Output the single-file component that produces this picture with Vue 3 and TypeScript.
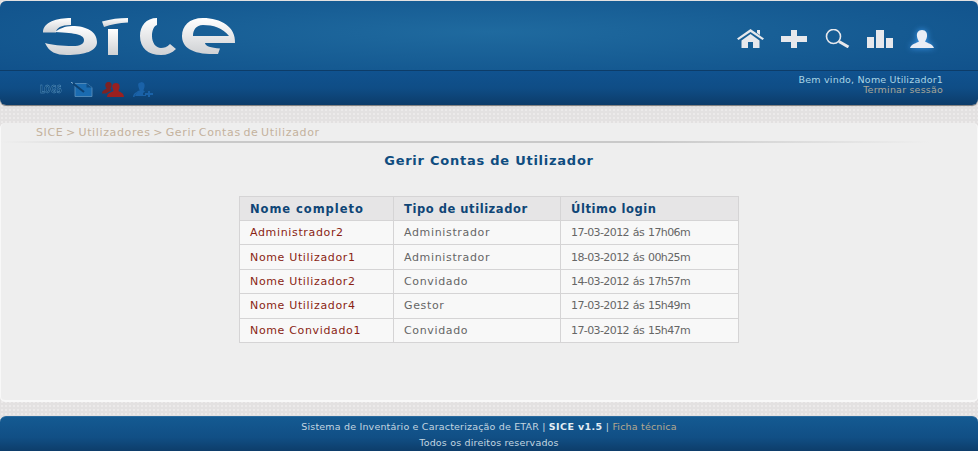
<template>
  <div class="page">
    <header class="header">
      <div class="top-bar">
        <svg class="logo" width="200" height="44" viewBox="0 0 200 44" aria-label="SICE">
          <defs>
            <linearGradient id="logoFill" x1="0" y1="0" x2="0" y2="1">
              <stop offset="0" stop-color="#ffffff" />
              <stop offset="1" stop-color="#cfd1d4" />
            </linearGradient>
          </defs>
          <g fill="url(#logoFill)">
            <path d="M28 1C14 1 0 5 0 15.500H13C13 11 18 8 28 8Z" />
            <path d="M12 15C16 12 22 9 29 9C44 9 54 15 54 25C54 34 42 38 24 38C13 38 6 35 2 26C9 28 18 29 30 29C37 29 41 27 41 23C41 18 34 16 12 15Z" />
            <path d="M65 12H75V38H65Z" />
            <path d="M59 4.500C68 2 76 1 85 1V5.500C76 6 68 7.500 61 10Z" />
            <path d="M114 1C103 1 97 9 97 19C97 31 105 38 118 38C124 38 129 36 133 32L127 27C124 30 121 31 118 31C113 31 109 26 109 19C109 13 111 9 114 8Z" />
            <path fill-rule="evenodd" d="M160 1C146 1 139 9 139 19C139 31 150 38 175 37L177 31.500C168 31 162 29 162 26H192C193 10 178 1 160 1ZM160 8C170 8 180 11 186 19H150C150 13 153 8 160 8Z" />
          </g>
        </svg>
        <nav class="main-nav">
          <svg width="27" height="19" viewBox="0 0 27 19"><path fill="#e7e8ec" d="M13.500 0L27 9.500L25.500 11L13.500 3L1.500 11L0 9.500ZM4.500 11.500L13.500 5L22.500 11.500V19H16V13H11V19H4.500ZM20 1H23V6L20 4Z" /></svg>
          <svg width="26" height="18" viewBox="0 0 26 18"><path fill="#e7e8ec" d="M10 0H16V6H26V12H16V18H10V12H0V6H10Z" /></svg>
          <svg width="26" height="19" viewBox="0 0 26 19" fill="none" stroke="#e7e8ec"><circle cx="9.500" cy="7.500" r="7" stroke-width="1.600" /><path stroke-width="3" d="M15 12.500L24.500 18" /></svg>
          <svg width="26" height="18" viewBox="0 0 26 18"><path fill="#e7e8ec" d="M0 7H7V18H0ZM9 0H17V18H9ZM19 8H26V18H19Z" /></svg>
          <svg class="user-icon" width="24" height="18" viewBox="0 0 24 18"><path fill="#e9edf5" d="M12 0C16 0 17.500 3 17 6.500C16.700 9 15.500 10.500 15 11.500C17 13 23 14 24 18H0C1 14 7 13 9 11.500C8.500 10.500 7.300 9 7 6.500C6.500 3 8 0 12 0Z" /></svg>
        </nav>
      </div>
      <div class="sub-bar">
        <div class="tools">
          <span class="logs">LOGS</span>
          <svg width="22" height="15" viewBox="0 0 22 15"><path fill="#1a6bb0" stroke="#5d93bf" stroke-width="0.800" d="M4 1.500H15.500L21 5.500V14.500H4Z" /><path fill="#0f4e86" d="M15.500 1.500L21 5.500H15.500Z" /><path stroke="#8fb8d6" stroke-width="1" d="M0 0L2 1.500" /><path stroke="#0e4272" stroke-width="2.200" d="M2 1.500L13 10" /></svg>
          <svg width="22" height="15" viewBox="0 0 22 15"><path fill="#7e2222" d="M6.500 0C9.500 0 10 2.500 9.500 4.500C9.200 5.500 8.500 6.500 8.500 7L10 8L4 11.500H0C0 8.500 3.500 7.500 4.500 6.500C4.500 6 3.800 5.500 3.500 4.500C3 2.500 3.500 0 6.500 0Z" /><path fill="#9a2020" d="M14 1C17.500 1 18 4 17.500 6C17.200 7.500 16.500 8 16.500 9C18 10 22 11 22 15H5C5 11 10 10 11.500 9C11.500 8 10.800 7.500 10.500 6C10 4 10.500 1 14 1Z" /></svg>
          <svg width="20" height="15" viewBox="0 0 20 15"><path fill="#1a62a8" d="M8 0C11.500 0 12 3 11.500 5C11.200 6.500 10.500 7.500 10.500 8.500L12 9.500L10 11V13H13V14H2C3 11 5.500 10 6.500 8.500C6.500 7.500 5.800 6.500 5.500 5C5 3 5 1.500 6 1C7 0.500 7.500 1 8 0ZM0 15C0 11 4.500 10 5.500 8.500L6 9C5 10.500 2 11.500 1.500 15ZM15 9H17V11H20V13H17V15H15V13H12V11H15Z" /></svg>
        </div>
        <div class="session">
          <div class="welcome">Bem vindo, Nome Utilizador1</div>
          <a class="logout">Terminar sessão</a>
        </div>
      </div>
    </header>

    <main class="card">
      <div class="breadcrumb">{{ crumbs.join(' > ') }}</div>
      <h1 class="title">Gerir Contas de Utilizador</h1>
      <table class="users">
        <thead>
          <tr>
            <th class="col-name">Nome completo</th>
            <th class="col-type">Tipo de utilizador</th>
            <th class="col-login">Último login</th>
          </tr>
        </thead>
        <tbody>
          <tr v-for="user in users" :key="user.name">
            <td class="name">{{ user.name }}</td>
            <td class="type">{{ user.type }}</td>
            <td class="login">{{ user.login }}</td>
          </tr>
        </tbody>
      </table>
    </main>

    <footer class="footer">
      <div>Sistema de Inventário e Caracterização de ETAR | <b>SICE v1.5</b> | <a class="tech">Ficha técnica</a></div>
      <div>Todos os direitos reservados</div>
    </footer>
  </div>
</template>

<script setup lang="ts">
type User = {
  name: string
  type: string
  login: string
}

const crumbs = ['SICE', 'Utilizadores', 'Gerir Contas de Utilizador']

const users: User[] = [
  { name: 'Administrador2', type: 'Administrador', login: '17-03-2012 ás 17h06m' },
  { name: 'Nome Utilizador1', type: 'Administrador', login: '18-03-2012 ás 00h25m' },
  { name: 'Nome Utilizador2', type: 'Convidado', login: '14-03-2012 ás 17h57m' },
  { name: 'Nome Utilizador4', type: 'Gestor', login: '17-03-2012 ás 15h49m' },
  { name: 'Nome Convidado1', type: 'Convidado', login: '17-03-2012 ás 15h47m' },
]
</script>

<style>
html,
body {
  margin: 0;
  overflow: hidden;
}
</style>

<style scoped>
.page {
  display: flex;
  flex-direction: column;
  height: 451px;
  padding-top: 1px;
  box-sizing: border-box;
  font-family: "DejaVu Sans", sans-serif;
  font-size: 11px;
  background-color: #e3e1e1;
  background-image: radial-gradient(#eceaea 1px, transparent 1px);
  background-size: 4px 4px;
}

.header {
  flex: none;
  border-radius: 6px;
  overflow: hidden;
  box-shadow: 0 1px 1px #777;
}

.top-bar {
  display: flex;
  align-items: flex-start;
  justify-content: space-between;
  height: 70px;
  padding: 16px 44px 0 43px;
  box-sizing: border-box;
  background: radial-gradient(ellipse 70% 90% at 50% 45%, #1f6a9f 0%, #155a92 60%, #10508a 100%);
  border-bottom: 1px solid #0d3c68;
}

.main-nav {
  display: flex;
  align-items: center;
  gap: 17px;
  margin-top: 12px;
}

.user-icon {
  filter: drop-shadow(0 0 3px #3d9bf0);
}

.sub-bar {
  display: flex;
  justify-content: space-between;
  height: 34px;
  padding: 4px 35px 0 40px;
  box-sizing: border-box;
  background: linear-gradient(#10528f, #0f4d86 50%, #0c3c6a);
}

.tools {
  display: flex;
  align-items: center;
  gap: 9px;
  height: 28px;
}

.logs {
  font-size: 11px;
  font-weight: bold;
  color: #0e4778;
  -webkit-text-stroke: 0.5px #5f9bc9;
  transform: scaleX(0.66);
  transform-origin: left center;
  margin-right: -11px;
  white-space: nowrap;
}

.session {
  text-align: right;
  font-size: 9.500px;
  line-height: 10px;
  letter-spacing: 0.2px;
}

.welcome {
  color: #a9d5e6;
}

.logout {
  color: #a7a697;
}

.card {
  flex: 1;
  margin: 18px 0 14px;
  padding: 3px 0 0;
  background: #eeeeee;
  border-radius: 5px;
  border: 1px solid #f8f8f8;
  border-width: 0 1px 2px 1px;
  display: flex;
  flex-direction: column;
}

.breadcrumb {
  padding: 0 0 1px 35px;
  line-height: 14px;
  font-size: 11px;
  letter-spacing: 0.63px;
  word-spacing: -1.500px;
  color: #c4b29d;
  margin-right: 48px;
  border-bottom: 2px solid transparent;
  border-image: linear-gradient(90deg, #eeeeee, #c9c9c9 20%, #c9c9c9 70%, #eeeeee) 1;
}

.title {
  margin: 10px 0 0;
  text-align: center;
  font-size: 13px;
  line-height: 16px;
  letter-spacing: 0.75px;
  font-weight: bold;
  color: #0f4d80;
}

.users {
  margin: 27px auto 0;
  width: 500px;
  border-collapse: collapse;
  table-layout: fixed;
  color: #666;
}

.users th,
.users td {
  border: 1px solid #d5d4d5;
  padding: 0 0 0 10px;
  text-align: left;
  height: 24.400px;
  box-sizing: border-box;
}

.users th {
  background: #e6e5e6;
  color: #0f4576;
  font-size: 11.500px;
  letter-spacing: 0.55px;
  height: 24px;
}

.users .col-name {
  letter-spacing: 0.95px;
}

.users td {
  background: #f8f8f8;
  letter-spacing: 0.65px;
}

.users .login {
  letter-spacing: -0.6px;
  word-spacing: 1px;
}

.col-name {
  width: 154px;
}

.col-type {
  width: 167px;
}

.users .name {
  color: #8a1f14;
}

.footer {
  flex: none;
  height: 35px;
  padding-top: 2px;
  box-sizing: border-box;
  border-radius: 6px 6px 0 0;
  background: linear-gradient(#145a92, #114f85 60%, #0d3d6a);
  border-top: 1px solid #2a6a9e;
  color: #c3d6e0;
  font-size: 9.500px;
  letter-spacing: 0.18px;
  text-align: center;
  line-height: 16px;
}

.footer b {
  color: #e4eef4;
  letter-spacing: 0.4px;
}

.tech {
  color: #b5a98f;
}
</style>
